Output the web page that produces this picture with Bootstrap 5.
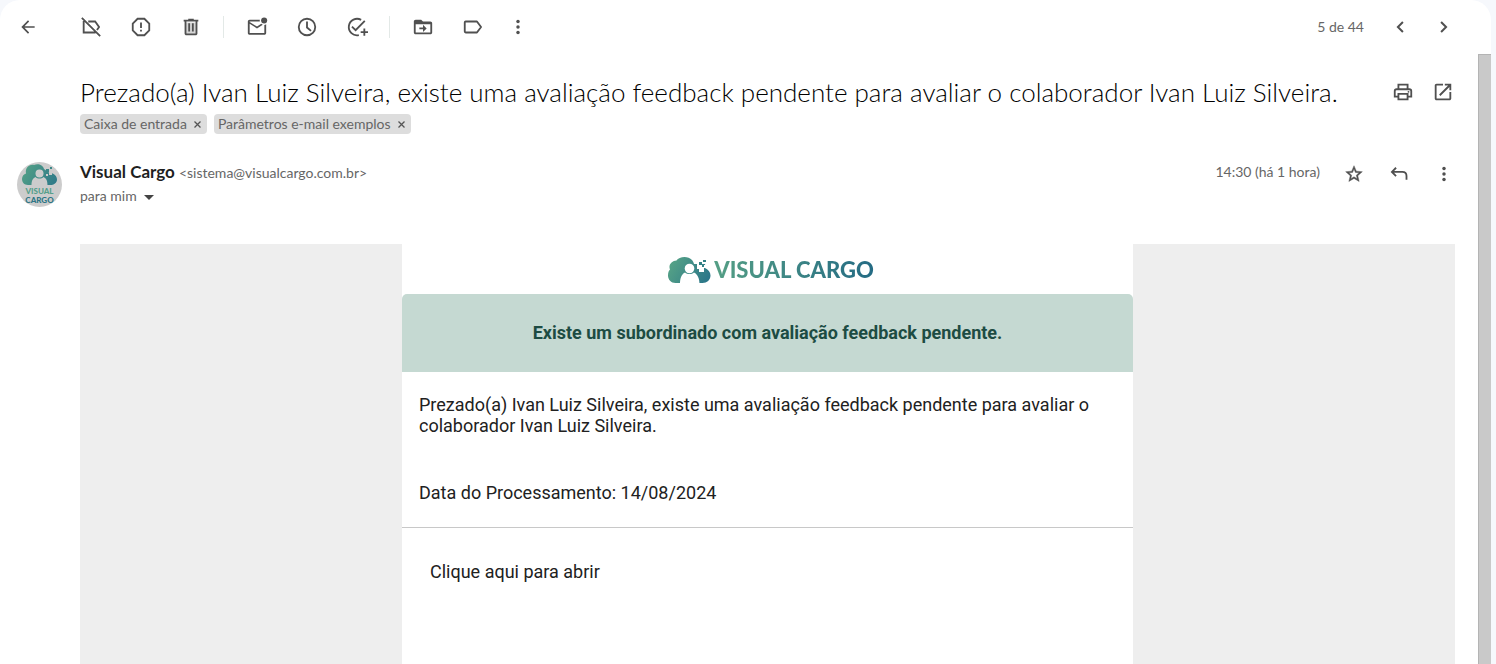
<!DOCTYPE html>
<html lang="pt-BR">
<head>
<meta charset="utf-8">
<meta name="viewport" content="width=device-width, initial-scale=1">
<title>Visual Cargo - avaliação pendente</title>
<link rel="stylesheet" href="https://cdn.jsdelivr.net/npm/bootstrap@5.3.0/dist/css/bootstrap.min.css">
<style>
body{background:#f6f8fc;color:#1f1f1f;font-family:Lato,"Liberation Sans",sans-serif;font-size:14px;line-height:20px}
.panel{margin-right:5px;border-radius:20px 20px 0 0;overflow:hidden}
.toolbar{height:54px;padding-left:8px;padding-right:27px}
.ico{width:40px;height:40px;padding:0;border:0;background:none;color:#505050;display:inline-flex;align-items:center;justify-content:center;flex:none}
.ico:hover{background:#eee;border-radius:50%}
.ico svg{width:22px;height:22px;fill:currentColor}
.ico.sm svg{width:20px;height:20px}
.group{gap:10px}
.back{margin-right:23px}
.sep{width:1px;height:22px;background:#e3e9e7;margin:0 13px 0 12px}
.more{margin-left:5px}
.pager{gap:4px}
.muted{color:#666}
.track{width:13px;background:#c9c9c9;border-left:1px solid #b4b4b4;border-top:1px solid #b4b4b4;flex:none}
.mail{padding:18px 23px 0 17px}
.gutter{padding-left:63px}
.subject{font-size:26px;line-height:36px;font-weight:300;color:#000}
.subject-actions{margin-right:-8px}
.tags{gap:7px;margin-top:2px}
.tag{background:#ddd;color:#666;border-radius:4px;height:20px;padding:0 6px 0 4px;gap:7px}
.tag button{border:0;background:none;padding:0;color:#555;line-height:20px;display:flex}
.tag svg{width:7px;height:7px;stroke:currentColor;stroke-width:1.3}
.from{margin-top:28px;margin-bottom:37px}
.avatar{width:45px;height:45px;margin-right:18px}
.sender{font-size:17px}
.to{margin-top:3px}
.acts{gap:5px;margin-right:-9px;margin-top:-8px;height:40px}
.when{line-height:36px;margin-right:9px}
.wrapbg{background:#eee}
.letter{max-width:731px;font:18px/21px Roboto,sans-serif;color:#212121}
.brandrow{height:50px;gap:3px;padding-left:6px;padding-top:1px}
.brandrow svg{width:44px;height:28px}
.wordmark{font:900 22px/28px Lato,sans-serif;background:linear-gradient(90deg,#559f85,#246b84);-webkit-background-clip:text;background-clip:text;color:transparent}
.notice{background:#c5d9d2;color:#1d4c43;border-radius:5px 5px 0 0;height:78px;padding-bottom:2px;font-weight:700}
.copy{padding:22px 17px 24px;border-bottom:1px solid #c8c8c8}
.copy p{margin:0}
.copy p + p{margin-top:46px}
.action{padding:33px 28px}
.action a{color:#212121;text-decoration:none}
</style>
</head>
<body>
<svg width="0" height="0" class="position-absolute" aria-hidden="true">
<defs>
<linearGradient id="cloudFill" gradientUnits="userSpaceOnUse" x1="4" y1="4" x2="42" y2="26"><stop offset="0" stop-color="#56a386"/><stop offset="1" stop-color="#297489"/></linearGradient>
<symbol id="cloud" viewBox="0 0 44 28">
<path fill="url(#cloudFill)" d="M8.500 27C4 27 1 23.500 1 19.500c0-3 .8-4.800 2-6C1 9 5 4.500 9.500 4.500 12 .5 21-.5 25 4c1 1.500 1.700 2.500 2 4h11c.3 1.500.3 2.500 0 4 3 1.500 5.500 4 5.500 7.500 0 4.500-3.500 7.500-8 7.500z"/>
<circle cx="22.500" cy="12.500" r="4.800" fill="#fff"/>
<path fill="#fff" d="M13 28c0-5 1-9.500 5-11.500 2.500 2 6.500 2 9 0 4 2 5.500 6.500 5.500 11.500z"/>
<path fill="#fff" d="M30 5h3v4h6v3h-2v4h-5v-3h-2z"/>
<path fill="#338085" d="M32 6h3v3h-3zM36 4h3v2h-3zM35 9h2v2h-2z"/>
</symbol>
<symbol id="dots" viewBox="0 0 24 24"><circle cx="12" cy="5.500" r="2.100"/><circle cx="12" cy="12" r="2.100"/><circle cx="12" cy="18.500" r="2.100"/></symbol>
</defs>
</svg>
<main class="panel bg-white min-vh-100 d-flex flex-column">
<header class="toolbar d-flex align-items-center">
<button class="ico sm back" aria-label="Voltar"><svg viewBox="0 0 24 24"><path d="M20 11H7.830l5.590-5.590L12 4l-8 8 8 8 1.410-1.410L7.830 13H20z"/></svg></button>
<div class="group d-flex">
<button class="ico" aria-label="Remover marcador"><svg viewBox="0 0 24 24"><g fill="none" stroke="currentColor" stroke-width="2"><path d="M2 2l20 20M4 5.500V18h13M9 6h7.500l4.300 6-2.300 3.300"/></g></svg></button>
<button class="ico" aria-label="Denunciar spam"><svg viewBox="0 0 24 24"><path fill="none" stroke="currentColor" stroke-width="2" d="M8.300 3h7.400L21 8.300v7.400L15.700 21H8.300L3 15.700V8.300z"/><path d="M11 7h2v6h-2zM11 15h2v2h-2z"/></svg></button>
<button class="ico" aria-label="Excluir"><svg viewBox="0 0 24 24"><path fill="#d6d6d6" d="M6 7h12v13H6z"/><path fill-rule="evenodd" d="M15 4V3H9v1H4v2h1v13c0 1.100.9 2 2 2h10c1.100 0 2-.9 2-2V6h1V4h-5zM17 19H7V6h10z"/><path d="M9 8h2v9H9zM13 8h2v9h-2z"/></svg></button>
</div>
<span class="sep"></span>
<div class="group d-flex">
<button class="ico" aria-label="Marcar como não lida"><svg viewBox="0 0 24 24"><path d="M22 9v9.500c0 1.100-.9 2-2 2H4c-1.100 0-2-.9-2-2V6c0-1.100.9-2 2-2h11.100a5 5 0 0 0 0 2H4v.5l8 5 4.700-3c.5.5 1 .8 1.600 1L12 13.500 4 8.500v10h16V9.900c.7-.1 1.400-.5 2-.9z"/><circle cx="19.800" cy="5" r="3.300"/></svg></button>
<button class="ico" aria-label="Adiar"><svg viewBox="0 0 24 24"><circle cx="12" cy="12" r="9" fill="none" stroke="currentColor" stroke-width="2"/><path d="M11 6h2v6l4 3.500-1.200 1.400L11 13z"/></svg></button>
<button class="ico" aria-label="Adicionar às tarefas"><svg viewBox="0 0 24 24"><g fill="none" stroke="currentColor" stroke-width="2"><path d="M16.500 4.200A9 9 0 1 0 14 20.800M6.500 11.500l4 4L20.500 5.300M16 17.500h8M20 13.500v8"/></g></svg></button>
</div>
<span class="sep"></span>
<div class="group d-flex">
<button class="ico" aria-label="Mover para"><svg viewBox="0 0 24 24"><path fill-rule="evenodd" d="M20 6h-8l-2-2H4c-1.100 0-2 .9-2 2v12c0 1.100.9 2 2 2h16c1.100 0 2-.9 2-2V8c0-1.100-.9-2-2-2zM20 18H4V9h16z"/><path d="M12 17.500l4-4-4-4v3H8v2h4z"/></svg></button>
<button class="ico" aria-label="Marcadores"><svg viewBox="0 0 24 24"><path fill="none" stroke="currentColor" stroke-width="2" stroke-linejoin="round" d="M4 6h12.300l4.500 6-4.500 6H4q-1 0-1-1V7q0-1 1-1z"/></svg></button>
</div>
<button class="ico sm more" aria-label="Mais"><svg><use href="#dots"/></svg></button>
<span class="muted ms-auto me-3">5 de 44</span>
<div class="pager d-flex">
<button class="ico sm" aria-label="Mais recente"><svg viewBox="0 0 24 24"><path fill="none" stroke="currentColor" stroke-width="2.400" d="M15.500 6l-6 6 6 6"/></svg></button>
<button class="ico sm" aria-label="Mais antigo"><svg viewBox="0 0 24 24"><path fill="none" stroke="currentColor" stroke-width="2.400" d="M8.500 6l6 6-6 6"/></svg></button>
</div>
</header>
<div class="d-flex flex-grow-1">
<article class="mail flex-grow-1 d-flex flex-column">
<div class="gutter d-flex justify-content-between align-items-center">
<h1 class="subject m-0">Prezado(a) Ivan Luiz Silveira, existe uma avaliação feedback pendente para avaliar o colaborador Ivan Luiz Silveira.</h1>
<div class="subject-actions d-flex">
<button class="ico" aria-label="Imprimir"><svg viewBox="0 0 24 24"><g fill="none" stroke="currentColor" stroke-width="2"><path d="M7 8V4h10v4M7 17H3v-6q0-2 2-2h14q2 0 2 2v6h-4M7 14h10v6H7z"/></g><circle cx="18" cy="11.800" r="1"/></svg></button>
<button class="ico" aria-label="Abrir em nova janela"><svg viewBox="0 0 24 24"><path d="M19 19H5V5h7V3H5c-1.100 0-2 .9-2 2v14c0 1.100.9 2 2 2h14c1.100 0 2-.9 2-2v-7h-2v7zM14 3v2h3.590l-9.830 9.830 1.410 1.410L19 6.410V10h2V3h-7z"/></svg></button>
</div>
</div>
<div class="gutter d-flex tags">
<span class="tag d-flex align-items-center">Caixa de entrada<button aria-label="Remover Caixa de entrada"><svg viewBox="0 0 7 7"><path d="M.5.5l6 6M6.500.5l-6 6"/></svg></button></span>
<span class="tag d-flex align-items-center">Parâmetros e-mail exemplos<button aria-label="Remover Parâmetros"><svg viewBox="0 0 7 7"><path d="M.5.5l6 6M6.500.5l-6 6"/></svg></button></span>
</div>
<div class="d-flex from">
<svg class="avatar" viewBox="0 0 45 45" role="img" aria-label="Visual Cargo"><circle cx="22.500" cy="22.500" r="22.500" fill="#ccc"/>
<path fill="url(#cloudFill)" d="M11 23c-4 0-6-3-6-6s2-5 4-5.500C8 6 12 2 17 3c4-2 9 0 10 4 2 1 3 3 6 4 4 0 7 3 7 6.500S37 23 33 23z"/><circle cx="22.500" cy="11.500" r="4" fill="#ccc"/><path fill="#ccc" d="M14.500 24c0-4 .5-7.500 4-9 2 2 6 2 8 0 3.500 1.500 4 5 4 9z"/><path fill="#3a8687" d="M29 7h3v3h-3zM33 5h2v2h-2z"/><path fill="#ccc" d="M32 10h3v3h-3zM29 12h2v2h-2z"/>
<g font-family="Lato,sans-serif" font-weight="900" font-size="8" text-anchor="middle"><text x="22.500" y="32" fill="#559f8b">VISUAL</text><text x="22.500" y="41" fill="#2d7585">CARGO</text></g></svg>
<div class="flex-grow-1">
<div class="d-flex align-items-baseline gap-1"><strong class="sender">Visual Cargo</strong><span class="muted">&lt;sistema@visualcargo.com.br&gt;</span></div>
<div class="muted to">para mim <svg width="10" height="5" viewBox="0 0 10 5" class="ms-1"><path d="M0 0h10L5 5z" fill="#444"/></svg></div>
</div>
<div class="d-flex acts">
<span class="muted when">14:30 (há 1 hora)</span>
<button class="ico sm" aria-label="Com estrela"><svg viewBox="0 0 24 24"><path stroke="currentColor" stroke-width=".5" d="M22 9.240l-7.190-.62L12 2 9.190 8.630 2 9.240l5.460 4.730L5.820 21 12 17.270 18.180 21l-1.630-7.030L22 9.240zM12 15.400l-3.760 2.270 1-4.280-3.320-2.880 4.380-.38L12 6.100l1.710 4.040 4.380.38-3.320 2.880 1 4.280L12 15.400z"/></svg></button>
<button class="ico sm" aria-label="Responder"><svg viewBox="0 0 24 24"><path fill="none" stroke="currentColor" stroke-width="2.200" d="M8.500 4.500L3.500 9.500l5 5M3.500 9.500H16q5 0 5 5V19"/></svg></button>
<button class="ico sm" aria-label="Mais opções"><svg><use href="#dots"/></svg></button>
</div>
</div>
<div class="gutter flex-grow-1 d-flex">
<div class="wrapbg flex-grow-1 d-flex justify-content-center">
<section class="letter bg-white w-100">
<div class="brandrow d-flex align-items-center justify-content-center"><svg aria-hidden="true"><use href="#cloud"/></svg><span class="wordmark">VISUAL CARGO</span></div>
<div class="notice d-flex align-items-center justify-content-center">Existe um subordinado com avaliação feedback pendente.</div>
<div class="copy"><p>Prezado(a) Ivan Luiz Silveira, existe uma avaliação feedback pendente para avaliar o colaborador Ivan Luiz Silveira.</p><p>Data do Processamento: 14/08/2024</p></div>
<div class="action"><a href="#">Clique aqui para abrir</a></div>
</section>
</div>
</div>
</article>
<div class="track"></div>
</div>
</main>
<script src="https://cdn.jsdelivr.net/npm/bootstrap@5.3.0/dist/js/bootstrap.bundle.min.js"></script>
</body>
</html>
